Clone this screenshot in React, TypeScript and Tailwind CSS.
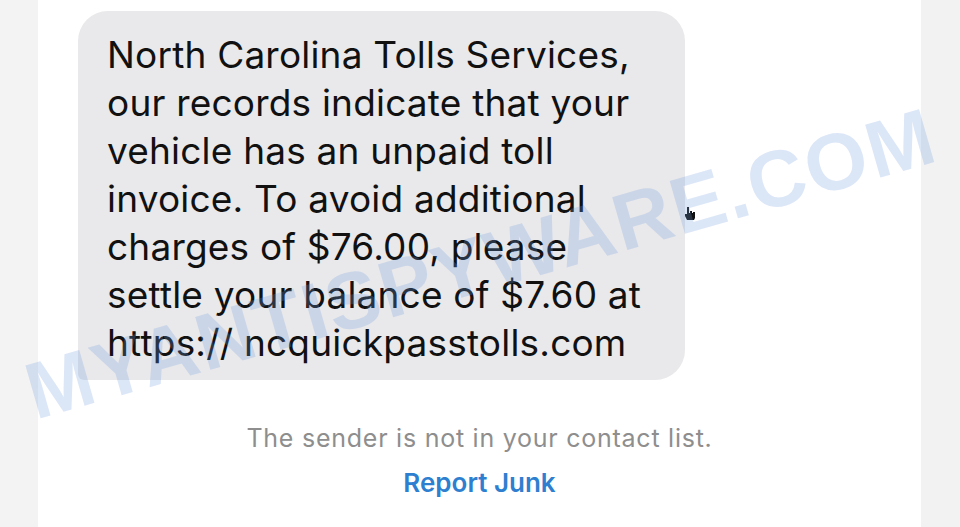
export default function App() {
  return (
    <div className="relative w-[960px] h-[527px] overflow-hidden flex bg-[#f2f2f2] font-['Inter','Liberation_Sans',sans-serif]">
      {/* left strip */}
      <div className="w-[38px] shrink-0 bg-[#f3f3f3]" />

      {/* conversation */}
      <main className="w-[883px] shrink-0 bg-white flex flex-col">
        <div className="pt-[11px] pl-[40px]">
          <div className="w-[607px] h-[369px] bg-[#e9e9eb] rounded-[30px] rounded-bl-[6px] pl-[29px] pt-[20px]">
            <p className="text-[37px] leading-[48px] text-[#111] tracking-[0.2px] whitespace-nowrap">
              North Carolina Tolls Services,
              <br />
              our records indicate that your
              <br />
              vehicle has an unpaid toll
              <br />
              invoice. To avoid additional
              <br />
              charges of $76.00, please
              <br />
              settle your balance of $7.60 at
              <br />
              https:// ncquickpasstolls.com
            </p>
          </div>
        </div>

        <div className="mt-[42px] flex flex-col items-center">
          <p className="text-[25px] leading-[32px] text-[#8e8e8e] tracking-[0.75px]">
            The sender is not in your contact list.
          </p>
          <button className="mt-[13px] text-[26px] leading-[32px] font-semibold text-[#2f7fd0]">
            Report Junk
          </button>
        </div>
      </main>

      {/* right strip */}
      <div className="flex-1 bg-[#f2f2f2]" />

      {/* cursor */}
      <svg className="absolute left-[684px] top-[206px]" width="12" height="14" viewBox="0 0 12 14">
        <path d="M3 1h2v6h1V5h2v2h1V6h2v6l-1 2H3L1 10V8h2z" fill="#111" />
      </svg>

      {/* watermark */}
      <div className="absolute left-[-14px] top-[224px] w-[990px] text-center -rotate-[16deg] pointer-events-none">
        <span className="text-[80px] leading-none font-bold tracking-[2px] text-[#6f9be0]/25 font-['Liberation_Sans',sans-serif]">
          MYANTISPYWARE.COM
        </span>
      </div>
    </div>
  );
}
